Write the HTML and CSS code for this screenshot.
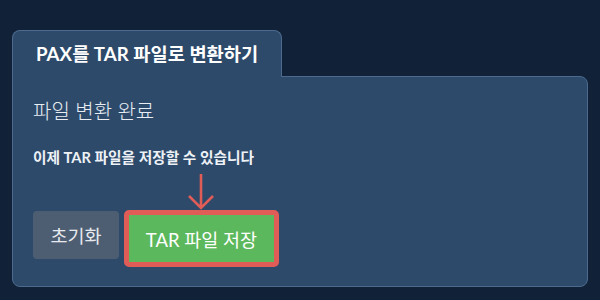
FILE: index.html
```html
<!DOCTYPE html>
<html lang="ko">
<head>
    <meta charset="UTF-8">
    <title>PAX를 TAR 파일로 변환하기</title>
    <link rel="stylesheet" href="styles.css">
</head>
<body>
    <div class="wrap">
        <div class="tab">PAX를 TAR 파일로 변환하기</div>
        <div class="panel">
            <h2 class="status">파일 변환 완료</h2>
            <p class="hint">이제 TAR 파일을 저장할 수 있습니다</p>
            <div class="btns">
                <button class="btn reset">초기화</button>
                <div class="save-box">
                    <svg class="arrow" width="30" height="38" viewBox="0 0 30 38">
                        <path d="M15 1 V35 M3 23 L15 35 L27 23" fill="none" stroke="#df5c57" stroke-width="2.6"/>
                    </svg>
                    <button class="btn save">TAR 파일 저장</button>
                </div>
            </div>
        </div>
    </div>
</body>
</html>
```

FILE: styles.css
```css
*{
    margin: 0;
    padding: 0;
    box-sizing: border-box;
}
body{
    background-color: #112238;
    font-family: Lato, "Noto Sans CJK KR", sans-serif;
    color: #fff;
}
.wrap{
    padding: 30px 12px 0 12px;
}
.tab{
    display: inline-block;
    position: relative;
    z-index: 1;
    margin-bottom: -1px;
    height: 47px;
    padding: 0 23px;
    line-height: 46px;
    font-size: 18.7px;
    font-weight: 700;
    background-color: #2d4a6b;
    border: 1px solid #4c6a8e;
    border-bottom: none;
    border-radius: 8px 8px 0 0;
}
.panel{
    height: 211px;
    padding: 17px 20px 0 20px;
    background-color: #2d4a6b;
    border: 1px solid #4c6a8e;
    border-radius: 0 8px 8px 8px;
}
.status{
    font-size: 20px;
    font-weight: 300;
    line-height: 34px;
    color: #e8edf3;
}
.hint{
    margin-top: 19px;
    font-size: 14.7px;
    font-weight: 700;
    line-height: 20px;
    color: #eef2f6;
}
.btns{
    display: flex;
    align-items: flex-start;
    gap: 5px;
    margin-top: 44px;
}
.btn{
    font-family: Lato, "Noto Sans CJK KR", sans-serif;
    font-size: 18.5px;
    color: #fff;
    border: none;
    border-radius: 4px;
    cursor: pointer;
}
.reset{
    width: 86px;
    height: 48px;
    background-color: #4e5e72;
    color: #e6eaef;
}
.save-box{
    position: relative;
}
.save{
    width: 155px;
    height: 57px;
    margin-top: -1px;
    background-color: #5cb85c;
    border: 5px solid #df5c57;
    border-radius: 5px;
}
.arrow{
    position: absolute;
    left: 62px;
    top: -38px;
}
```
